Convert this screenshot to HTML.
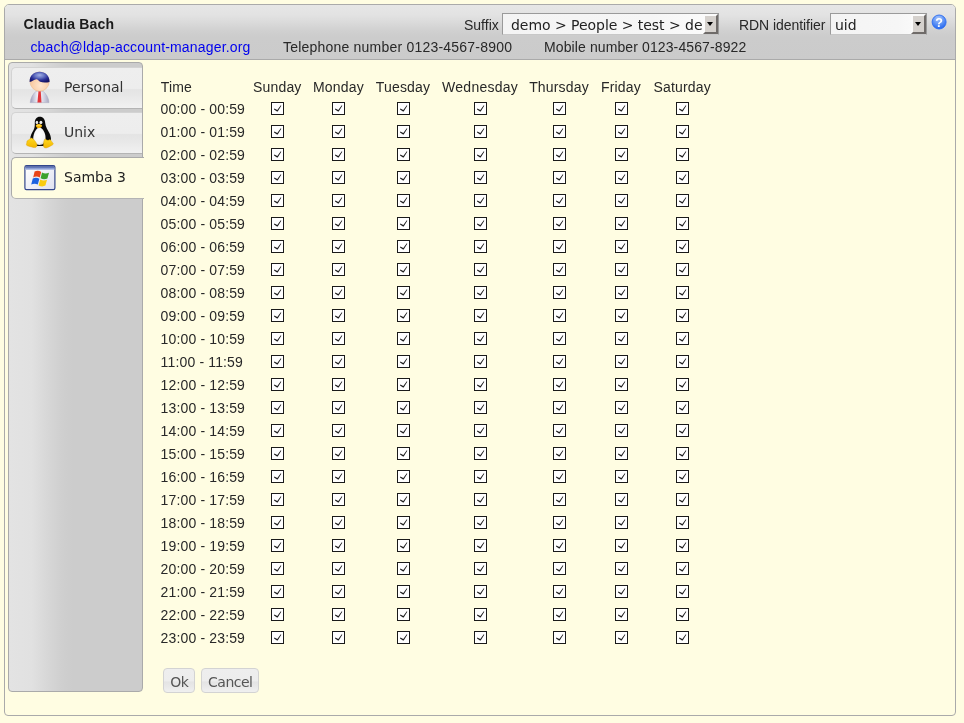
<!DOCTYPE html>
<html lang="en">
<head>
<meta charset="utf-8">
<title>LDAP Account Manager</title>
<style>
html,body{margin:0;padding:0;}
body{width:964px;height:723px;overflow:hidden;background:#fffde2;font-family:"Liberation Sans",Arial,sans-serif;font-size:14px;color:#222;position:relative;}
.abs{position:absolute;white-space:nowrap;}
#wrap{position:absolute;left:0;top:0;width:964px;height:723px;will-change:transform;}
#box{position:absolute;left:4px;top:4px;width:950px;height:710px;border:1px solid #aaa;border-radius:5px 5px 4px 4px;background:#fffde2;}
#head{position:absolute;left:0;top:0;width:950px;height:54px;border-bottom:1px solid #aaa;border-radius:4px 4px 0 0;background:linear-gradient(#e6e6e6 0%,#e3e3e3 18%,#dadada 33%,#d0d0d0 48%,#cccccc 60%,#cbcbcb 100%);}
.t{position:absolute;white-space:nowrap;line-height:16px;height:16px;font-size:14px;letter-spacing:0.17px;color:#282828;}
a.t{color:#0000ee;text-decoration:none;}
.sel{position:absolute;box-sizing:border-box;height:22px;background:linear-gradient(90deg,#f4f4f4,#f6f6f6 70%,#fcfcfc);border:1px solid;border-color:#9a9a9a #999 #c8c8c8 #9a9a9a;font-family:"DejaVu Sans",Verdana,sans-serif;font-size:14px;color:#222;overflow:hidden;white-space:nowrap;}
.sel span{position:absolute;top:2.6px;line-height:17px;}
.sel i{position:absolute;right:0px;top:0px;width:15px;height:20px;background:#d5d1cd;border:2px solid;border-color:#fbfbfb #6f6b69 #6f6b69 #fbfbfb;box-sizing:border-box;}
.sel i:after{content:"";position:absolute;left:2.4px;top:6px;border:3.5px solid transparent;border-top:4px solid #000;border-bottom:0;}
#tabs{position:absolute;left:8px;top:62px;width:133px;height:628px;border:1px solid #aaa;border-radius:4px;background:linear-gradient(90deg,#e3e3e3 0%,#e1e1e1 17%,#d7d7d7 29%,#cfcfcf 40%,#cccccc 48%,#cccccc 100%);box-sizing:content-box;}
.tab{position:absolute;left:11px;width:130px;height:40px;border-bottom-color:#b4b4b4 !important;border:1px solid #d3d3d3;border-right:0;border-radius:5px 0 0 5px;background:linear-gradient(#eeeeee 0%,#ededed 51%,#e4e4e4 54%,#e7e7e7 68%,#f1f1f1 100%);font-family:"DejaVu Sans",Verdana,sans-serif;font-size:14px;color:#333;}
.tab.act{background:#fffde2;border-color:#aaa;width:132px;color:#222;}
.tab span{position:absolute;left:52px;top:10px;line-height:18px;white-space:nowrap;}
.cb{position:absolute;width:11px;height:11px;border:1px solid #1a1a1a;background:#fff;}
.cb svg{position:absolute;left:0;top:0;}
.btn{position:absolute;box-sizing:border-box;height:25px;border:1px solid #d3d3d3;border-radius:4px;background:linear-gradient(#eeeeee 0%,#ededed 52%,#e4e4e4 56%,#e7e7e7 70%,#f0f0f0 100%);font-family:"DejaVu Sans",Verdana,sans-serif;font-size:14px;letter-spacing:-0.5px;color:#555;text-align:center;line-height:26px;text-indent:0.5px;}
svg.ic{position:absolute;left:0;top:0;overflow:visible;}
</style>
</head>
<body>
<div id="wrap">
<div id="box">
<div id="head"></div>
</div>
<div class="t" style="left:23.5px;top:16px;font-weight:bold;letter-spacing:0.16px;color:#1a1a1a;">Claudia Bach</div>
<a class="t" style="left:30.4px;top:38.6px;">cbach@ldap-account-manager.org</a>
<div class="t" style="left:283px;top:38.6px;letter-spacing:0.21px;">Telephone number 0123-4567-8900</div>
<div class="t" style="left:544px;top:38.6px;letter-spacing:0.11px;">Mobile number 0123-4567-8922</div>
<div class="t" style="left:464px;top:17px;letter-spacing:0">Suffix</div>
<div class="sel" style="left:502px;top:13px;width:217px;"><span style="left:8px;letter-spacing:-0.04px;">demo &gt; People &gt; test &gt; demo</span><i></i></div>
<div class="t" style="left:739px;top:17px;letter-spacing:-0.06px;">RDN identifier</div>
<div class="sel" style="left:830px;top:13px;width:97px;"><span style="left:4px;">uid</span><i></i></div>

<div id="tabs"></div>
<div class="tab" style="top:67px;"><span>Personal</span></div>
<div class="tab" style="top:112px;"><span>Unix</span></div>
<div class="tab act" style="top:157px;"><span>Samba 3</span></div>

<svg class="ic" width="964" height="723" viewBox="0 0 964 723">
<defs>
<radialGradient id="hg" cx="0.45" cy="0.25" r="0.75"><stop offset="0" stop-color="#a9c6fb"/><stop offset="0.55" stop-color="#5f93f5"/><stop offset="1" stop-color="#2466ee"/></radialGradient>
<radialGradient id="face" cx="0.55" cy="0.7" r="0.7"><stop offset="0" stop-color="#fee6d0"/><stop offset="1" stop-color="#f6bf90"/></radialGradient>
<radialGradient id="hair" cx="0.5" cy="0.38" r="0.62" fx="0.5" fy="0.3"><stop offset="0" stop-color="#a3b0e6"/><stop offset="0.35" stop-color="#6a78c6"/><stop offset="0.7" stop-color="#2a2f96"/><stop offset="1" stop-color="#141466"/></radialGradient>
<linearGradient id="suit" x1="0" y1="0" x2="1" y2="0"><stop offset="0" stop-color="#9c9cba"/><stop offset="0.25" stop-color="#d4d4e2"/><stop offset="0.42" stop-color="#f6f6fb"/><stop offset="0.6" stop-color="#e6e6f0"/><stop offset="0.8" stop-color="#c8c8da"/><stop offset="1" stop-color="#a6a6c0"/></linearGradient>
<linearGradient id="wtitle" x1="0" y1="0" x2="0" y2="1"><stop offset="0" stop-color="#2f458f"/><stop offset="0.5" stop-color="#7f93cf"/><stop offset="1" stop-color="#c5cfee"/></linearGradient>
<linearGradient id="wbody" x1="0" y1="0" x2="1" y2="1"><stop offset="0" stop-color="#ffffff"/><stop offset="1" stop-color="#dfe1f0"/></linearGradient>
<radialGradient id="belly" cx="0.45" cy="0.4" r="0.7"><stop offset="0" stop-color="#ffffff"/><stop offset="0.7" stop-color="#f4f4f4"/><stop offset="1" stop-color="#c8c8c8"/></radialGradient>
<linearGradient id="foot" x1="0" y1="0" x2="0" y2="1"><stop offset="0" stop-color="#ffd820"/><stop offset="1" stop-color="#f2b600"/></linearGradient>
</defs>
<!-- help -->
<g>
<circle cx="939.1" cy="22" r="7.0" fill="url(#hg)" stroke="#2b6cf0" stroke-width="0.9"/>
<text x="939.1" y="27" text-anchor="middle" font-family="Liberation Sans,Arial,sans-serif" font-weight="bold" font-size="12.5" fill="#ffffff">?</text>
</g>
<!-- user -->
<g>
<path d="M30.2 102.6 C30.6 98 32.8 94 36.2 91.2 L43 91.2 C46.4 94 48.6 98 49 102.6 Z" fill="url(#suit)" stroke="#a4a4bc" stroke-width="0.5"/>
<path d="M38.5 90.8 L40.7 90.8 L41.5 102.6 L37.4 102.6 Z" fill="#e2353a"/>
<circle cx="39.6" cy="81.6" r="9.6" fill="url(#face)" stroke="#e9b58b" stroke-width="0.5"/>
<path d="M29.6 82 C29.4 75.5 34 71.8 39.6 71.8 C45.2 71.8 49.8 75.8 49.6 81.9 C46.5 82.8 42.5 82.8 40.2 81.8 C38.9 81.2 38.3 79.6 36.8 79.2 C34.4 78.8 32.5 81.6 29.6 82 Z" fill="url(#hair)"/>
</g>
<!-- tux -->
<g>
<path d="M39.8 116.8 C43.2 116.8 45 119.5 45.2 123 C45.4 127 48 130 49.6 133.5 C51 136.6 51.4 139.5 50.6 141.5 C49.8 143.4 47 143.6 45.5 145.2 C43.5 146.4 36.5 146.4 34.8 145.2 C33 143.5 30.8 142 30.4 139 C30 136 32.2 132.5 33.6 130 C35 127.5 34.8 125.5 34.8 122.6 C34.8 119.2 36.6 116.8 39.8 116.8 Z" fill="#0a0a0a"/>
<path d="M39.4 127.5 C42.5 127.5 45.6 133 45.6 138 C45.6 142.2 43.2 145 39.6 145 C35.6 145 33.2 142.5 33.2 138.6 C33.2 133.5 36.4 127.5 39.4 127.5 Z" fill="url(#belly)"/>
<ellipse cx="36.9" cy="122.4" rx="1.3" ry="1.6" fill="#e8e8e8"/>
<ellipse cx="40.9" cy="122.4" rx="1.5" ry="1.7" fill="#f0f0f0"/>
<path d="M35.8 125.6 C36.6 124 38.2 123.8 39.2 123.9 C40.4 124 42 124.8 42.2 125.8 C41.8 127.2 40 128.2 38.6 128.2 C37.2 128.2 35.8 127 35.8 125.6 Z" fill="#f7b60a"/>
<path d="M36 125.4 C37.4 124.4 40.6 124.6 42 125.6 C40.6 126 37.4 126.2 36 125.4 Z" fill="#ffd93a"/>
<path d="M31.2 138 C32.6 137.6 34.4 140 36 142.4 C37.2 144.2 37.6 146.2 36 147.2 C34.4 148.2 31.6 146.8 28.8 146.2 C26.4 145.7 26 144.8 26.6 143.4 C27.2 142 26.4 141.2 27.6 140.6 C29 140 30 138.4 31.2 138 Z" fill="url(#foot)" stroke="#d99a00" stroke-width="0.4"/>
<path d="M45.2 138.8 C46.4 140.6 48.8 140.6 50 139.4 C51.4 140.4 51.6 142 53 143.2 C54 144 52.6 145 50.6 146 C48.6 147 46.6 148.4 44.8 147.8 C43 147.2 43.4 145 43.6 143.2 C43.8 141.4 44.2 139.4 45.2 138.8 Z" fill="url(#foot)" stroke="#d99a00" stroke-width="0.4"/>
</g>
<!-- samba -->
<g>
<rect x="24.9" y="165.7" width="30" height="24" rx="1.6" fill="url(#wbody)" stroke="#33468c" stroke-width="1.2"/>
<path d="M25.4 170 L25.4 167.4 Q25.4 166.2 26.6 166.2 L53.2 166.2 Q54.4 166.2 54.4 167.4 L54.4 170 Z" fill="url(#wtitle)"/>
<path d="M34.6 171.6 C36.8 170.4 39.2 170.6 41.2 172 L39.8 177.6 C37.8 176.4 35.4 176.2 33.2 177.4 Z" fill="#e8451a"/>
<path d="M42 172.6 C44.2 173.8 46.6 173.8 49 172.8 L47.4 178.6 C45.2 179.6 42.8 179.6 40.6 178.2 Z" fill="#3aa22c"/>
<path d="M32.8 178.6 C35 177.4 37.4 177.6 39.4 178.8 L37.8 184.6 C35.8 183.4 33.4 183.4 31.2 184.6 Z" fill="#1c62e0"/>
<path d="M40.2 179.6 C42.4 180.8 44.8 180.8 47 179.8 L45.4 185.6 C43.2 186.8 40.8 186.6 38.6 185.4 Z" fill="#f9cc10"/>
</g>
</svg>

<div class="t" style="left:160.7px;top:79px;">Time</div>
<div class="t" style="left:253.0px;top:79px;width:48px;text-align:center;">Sunday</div>
<div class="t" style="left:313.0px;top:79px;width:50px;text-align:center;">Monday</div>
<div class="t" style="left:375.5px;top:79px;width:55px;text-align:center;">Tuesday</div>
<div class="t" style="left:442.1px;top:79px;width:75.8px;text-align:center;letter-spacing:0.26px;">Wednesday</div>
<div class="t" style="left:529.0px;top:79px;width:60px;text-align:center;">Thursday</div>
<div class="t" style="left:601.0px;top:79px;width:40px;text-align:center;">Friday</div>
<div class="t" style="left:653.5px;top:79px;width:57px;text-align:center;">Saturday</div>
<div class="t" style="left:160.6px;top:101px;letter-spacing:0.15px;">00:00 - 00:59</div>
<div class="cb" style="left:271px;top:102px;"><svg width="11" height="11" viewBox="0 0 11 11"><path d="M2.3 5.5 L5.3 7.1 L8.8 2.3 L9.3 2.7 L5.7 8.4 L5.0 8.5 L2.0 6.4 Z" fill="#1c1c1c"/></svg></div>
<div class="cb" style="left:332px;top:102px;"><svg width="11" height="11" viewBox="0 0 11 11"><path d="M2.3 5.5 L5.3 7.1 L8.8 2.3 L9.3 2.7 L5.7 8.4 L5.0 8.5 L2.0 6.4 Z" fill="#1c1c1c"/></svg></div>
<div class="cb" style="left:397px;top:102px;"><svg width="11" height="11" viewBox="0 0 11 11"><path d="M2.3 5.5 L5.3 7.1 L8.8 2.3 L9.3 2.7 L5.7 8.4 L5.0 8.5 L2.0 6.4 Z" fill="#1c1c1c"/></svg></div>
<div class="cb" style="left:474px;top:102px;"><svg width="11" height="11" viewBox="0 0 11 11"><path d="M2.3 5.5 L5.3 7.1 L8.8 2.3 L9.3 2.7 L5.7 8.4 L5.0 8.5 L2.0 6.4 Z" fill="#1c1c1c"/></svg></div>
<div class="cb" style="left:553px;top:102px;"><svg width="11" height="11" viewBox="0 0 11 11"><path d="M2.3 5.5 L5.3 7.1 L8.8 2.3 L9.3 2.7 L5.7 8.4 L5.0 8.5 L2.0 6.4 Z" fill="#1c1c1c"/></svg></div>
<div class="cb" style="left:615px;top:102px;"><svg width="11" height="11" viewBox="0 0 11 11"><path d="M2.3 5.5 L5.3 7.1 L8.8 2.3 L9.3 2.7 L5.7 8.4 L5.0 8.5 L2.0 6.4 Z" fill="#1c1c1c"/></svg></div>
<div class="cb" style="left:676px;top:102px;"><svg width="11" height="11" viewBox="0 0 11 11"><path d="M2.3 5.5 L5.3 7.1 L8.8 2.3 L9.3 2.7 L5.7 8.4 L5.0 8.5 L2.0 6.4 Z" fill="#1c1c1c"/></svg></div>
<div class="t" style="left:160.6px;top:124px;letter-spacing:0.15px;">01:00 - 01:59</div>
<div class="cb" style="left:271px;top:125px;"><svg width="11" height="11" viewBox="0 0 11 11"><path d="M2.3 5.5 L5.3 7.1 L8.8 2.3 L9.3 2.7 L5.7 8.4 L5.0 8.5 L2.0 6.4 Z" fill="#1c1c1c"/></svg></div>
<div class="cb" style="left:332px;top:125px;"><svg width="11" height="11" viewBox="0 0 11 11"><path d="M2.3 5.5 L5.3 7.1 L8.8 2.3 L9.3 2.7 L5.7 8.4 L5.0 8.5 L2.0 6.4 Z" fill="#1c1c1c"/></svg></div>
<div class="cb" style="left:397px;top:125px;"><svg width="11" height="11" viewBox="0 0 11 11"><path d="M2.3 5.5 L5.3 7.1 L8.8 2.3 L9.3 2.7 L5.7 8.4 L5.0 8.5 L2.0 6.4 Z" fill="#1c1c1c"/></svg></div>
<div class="cb" style="left:474px;top:125px;"><svg width="11" height="11" viewBox="0 0 11 11"><path d="M2.3 5.5 L5.3 7.1 L8.8 2.3 L9.3 2.7 L5.7 8.4 L5.0 8.5 L2.0 6.4 Z" fill="#1c1c1c"/></svg></div>
<div class="cb" style="left:553px;top:125px;"><svg width="11" height="11" viewBox="0 0 11 11"><path d="M2.3 5.5 L5.3 7.1 L8.8 2.3 L9.3 2.7 L5.7 8.4 L5.0 8.5 L2.0 6.4 Z" fill="#1c1c1c"/></svg></div>
<div class="cb" style="left:615px;top:125px;"><svg width="11" height="11" viewBox="0 0 11 11"><path d="M2.3 5.5 L5.3 7.1 L8.8 2.3 L9.3 2.7 L5.7 8.4 L5.0 8.5 L2.0 6.4 Z" fill="#1c1c1c"/></svg></div>
<div class="cb" style="left:676px;top:125px;"><svg width="11" height="11" viewBox="0 0 11 11"><path d="M2.3 5.5 L5.3 7.1 L8.8 2.3 L9.3 2.7 L5.7 8.4 L5.0 8.5 L2.0 6.4 Z" fill="#1c1c1c"/></svg></div>
<div class="t" style="left:160.6px;top:147px;letter-spacing:0.15px;">02:00 - 02:59</div>
<div class="cb" style="left:271px;top:148px;"><svg width="11" height="11" viewBox="0 0 11 11"><path d="M2.3 5.5 L5.3 7.1 L8.8 2.3 L9.3 2.7 L5.7 8.4 L5.0 8.5 L2.0 6.4 Z" fill="#1c1c1c"/></svg></div>
<div class="cb" style="left:332px;top:148px;"><svg width="11" height="11" viewBox="0 0 11 11"><path d="M2.3 5.5 L5.3 7.1 L8.8 2.3 L9.3 2.7 L5.7 8.4 L5.0 8.5 L2.0 6.4 Z" fill="#1c1c1c"/></svg></div>
<div class="cb" style="left:397px;top:148px;"><svg width="11" height="11" viewBox="0 0 11 11"><path d="M2.3 5.5 L5.3 7.1 L8.8 2.3 L9.3 2.7 L5.7 8.4 L5.0 8.5 L2.0 6.4 Z" fill="#1c1c1c"/></svg></div>
<div class="cb" style="left:474px;top:148px;"><svg width="11" height="11" viewBox="0 0 11 11"><path d="M2.3 5.5 L5.3 7.1 L8.8 2.3 L9.3 2.7 L5.7 8.4 L5.0 8.5 L2.0 6.4 Z" fill="#1c1c1c"/></svg></div>
<div class="cb" style="left:553px;top:148px;"><svg width="11" height="11" viewBox="0 0 11 11"><path d="M2.3 5.5 L5.3 7.1 L8.8 2.3 L9.3 2.7 L5.7 8.4 L5.0 8.5 L2.0 6.4 Z" fill="#1c1c1c"/></svg></div>
<div class="cb" style="left:615px;top:148px;"><svg width="11" height="11" viewBox="0 0 11 11"><path d="M2.3 5.5 L5.3 7.1 L8.8 2.3 L9.3 2.7 L5.7 8.4 L5.0 8.5 L2.0 6.4 Z" fill="#1c1c1c"/></svg></div>
<div class="cb" style="left:676px;top:148px;"><svg width="11" height="11" viewBox="0 0 11 11"><path d="M2.3 5.5 L5.3 7.1 L8.8 2.3 L9.3 2.7 L5.7 8.4 L5.0 8.5 L2.0 6.4 Z" fill="#1c1c1c"/></svg></div>
<div class="t" style="left:160.6px;top:170px;letter-spacing:0.15px;">03:00 - 03:59</div>
<div class="cb" style="left:271px;top:171px;"><svg width="11" height="11" viewBox="0 0 11 11"><path d="M2.3 5.5 L5.3 7.1 L8.8 2.3 L9.3 2.7 L5.7 8.4 L5.0 8.5 L2.0 6.4 Z" fill="#1c1c1c"/></svg></div>
<div class="cb" style="left:332px;top:171px;"><svg width="11" height="11" viewBox="0 0 11 11"><path d="M2.3 5.5 L5.3 7.1 L8.8 2.3 L9.3 2.7 L5.7 8.4 L5.0 8.5 L2.0 6.4 Z" fill="#1c1c1c"/></svg></div>
<div class="cb" style="left:397px;top:171px;"><svg width="11" height="11" viewBox="0 0 11 11"><path d="M2.3 5.5 L5.3 7.1 L8.8 2.3 L9.3 2.7 L5.7 8.4 L5.0 8.5 L2.0 6.4 Z" fill="#1c1c1c"/></svg></div>
<div class="cb" style="left:474px;top:171px;"><svg width="11" height="11" viewBox="0 0 11 11"><path d="M2.3 5.5 L5.3 7.1 L8.8 2.3 L9.3 2.7 L5.7 8.4 L5.0 8.5 L2.0 6.4 Z" fill="#1c1c1c"/></svg></div>
<div class="cb" style="left:553px;top:171px;"><svg width="11" height="11" viewBox="0 0 11 11"><path d="M2.3 5.5 L5.3 7.1 L8.8 2.3 L9.3 2.7 L5.7 8.4 L5.0 8.5 L2.0 6.4 Z" fill="#1c1c1c"/></svg></div>
<div class="cb" style="left:615px;top:171px;"><svg width="11" height="11" viewBox="0 0 11 11"><path d="M2.3 5.5 L5.3 7.1 L8.8 2.3 L9.3 2.7 L5.7 8.4 L5.0 8.5 L2.0 6.4 Z" fill="#1c1c1c"/></svg></div>
<div class="cb" style="left:676px;top:171px;"><svg width="11" height="11" viewBox="0 0 11 11"><path d="M2.3 5.5 L5.3 7.1 L8.8 2.3 L9.3 2.7 L5.7 8.4 L5.0 8.5 L2.0 6.4 Z" fill="#1c1c1c"/></svg></div>
<div class="t" style="left:160.6px;top:193px;letter-spacing:0.15px;">04:00 - 04:59</div>
<div class="cb" style="left:271px;top:194px;"><svg width="11" height="11" viewBox="0 0 11 11"><path d="M2.3 5.5 L5.3 7.1 L8.8 2.3 L9.3 2.7 L5.7 8.4 L5.0 8.5 L2.0 6.4 Z" fill="#1c1c1c"/></svg></div>
<div class="cb" style="left:332px;top:194px;"><svg width="11" height="11" viewBox="0 0 11 11"><path d="M2.3 5.5 L5.3 7.1 L8.8 2.3 L9.3 2.7 L5.7 8.4 L5.0 8.5 L2.0 6.4 Z" fill="#1c1c1c"/></svg></div>
<div class="cb" style="left:397px;top:194px;"><svg width="11" height="11" viewBox="0 0 11 11"><path d="M2.3 5.5 L5.3 7.1 L8.8 2.3 L9.3 2.7 L5.7 8.4 L5.0 8.5 L2.0 6.4 Z" fill="#1c1c1c"/></svg></div>
<div class="cb" style="left:474px;top:194px;"><svg width="11" height="11" viewBox="0 0 11 11"><path d="M2.3 5.5 L5.3 7.1 L8.8 2.3 L9.3 2.7 L5.7 8.4 L5.0 8.5 L2.0 6.4 Z" fill="#1c1c1c"/></svg></div>
<div class="cb" style="left:553px;top:194px;"><svg width="11" height="11" viewBox="0 0 11 11"><path d="M2.3 5.5 L5.3 7.1 L8.8 2.3 L9.3 2.7 L5.7 8.4 L5.0 8.5 L2.0 6.4 Z" fill="#1c1c1c"/></svg></div>
<div class="cb" style="left:615px;top:194px;"><svg width="11" height="11" viewBox="0 0 11 11"><path d="M2.3 5.5 L5.3 7.1 L8.8 2.3 L9.3 2.7 L5.7 8.4 L5.0 8.5 L2.0 6.4 Z" fill="#1c1c1c"/></svg></div>
<div class="cb" style="left:676px;top:194px;"><svg width="11" height="11" viewBox="0 0 11 11"><path d="M2.3 5.5 L5.3 7.1 L8.8 2.3 L9.3 2.7 L5.7 8.4 L5.0 8.5 L2.0 6.4 Z" fill="#1c1c1c"/></svg></div>
<div class="t" style="left:160.6px;top:216px;letter-spacing:0.15px;">05:00 - 05:59</div>
<div class="cb" style="left:271px;top:217px;"><svg width="11" height="11" viewBox="0 0 11 11"><path d="M2.3 5.5 L5.3 7.1 L8.8 2.3 L9.3 2.7 L5.7 8.4 L5.0 8.5 L2.0 6.4 Z" fill="#1c1c1c"/></svg></div>
<div class="cb" style="left:332px;top:217px;"><svg width="11" height="11" viewBox="0 0 11 11"><path d="M2.3 5.5 L5.3 7.1 L8.8 2.3 L9.3 2.7 L5.7 8.4 L5.0 8.5 L2.0 6.4 Z" fill="#1c1c1c"/></svg></div>
<div class="cb" style="left:397px;top:217px;"><svg width="11" height="11" viewBox="0 0 11 11"><path d="M2.3 5.5 L5.3 7.1 L8.8 2.3 L9.3 2.7 L5.7 8.4 L5.0 8.5 L2.0 6.4 Z" fill="#1c1c1c"/></svg></div>
<div class="cb" style="left:474px;top:217px;"><svg width="11" height="11" viewBox="0 0 11 11"><path d="M2.3 5.5 L5.3 7.1 L8.8 2.3 L9.3 2.7 L5.7 8.4 L5.0 8.5 L2.0 6.4 Z" fill="#1c1c1c"/></svg></div>
<div class="cb" style="left:553px;top:217px;"><svg width="11" height="11" viewBox="0 0 11 11"><path d="M2.3 5.5 L5.3 7.1 L8.8 2.3 L9.3 2.7 L5.7 8.4 L5.0 8.5 L2.0 6.4 Z" fill="#1c1c1c"/></svg></div>
<div class="cb" style="left:615px;top:217px;"><svg width="11" height="11" viewBox="0 0 11 11"><path d="M2.3 5.5 L5.3 7.1 L8.8 2.3 L9.3 2.7 L5.7 8.4 L5.0 8.5 L2.0 6.4 Z" fill="#1c1c1c"/></svg></div>
<div class="cb" style="left:676px;top:217px;"><svg width="11" height="11" viewBox="0 0 11 11"><path d="M2.3 5.5 L5.3 7.1 L8.8 2.3 L9.3 2.7 L5.7 8.4 L5.0 8.5 L2.0 6.4 Z" fill="#1c1c1c"/></svg></div>
<div class="t" style="left:160.6px;top:239px;letter-spacing:0.15px;">06:00 - 06:59</div>
<div class="cb" style="left:271px;top:240px;"><svg width="11" height="11" viewBox="0 0 11 11"><path d="M2.3 5.5 L5.3 7.1 L8.8 2.3 L9.3 2.7 L5.7 8.4 L5.0 8.5 L2.0 6.4 Z" fill="#1c1c1c"/></svg></div>
<div class="cb" style="left:332px;top:240px;"><svg width="11" height="11" viewBox="0 0 11 11"><path d="M2.3 5.5 L5.3 7.1 L8.8 2.3 L9.3 2.7 L5.7 8.4 L5.0 8.5 L2.0 6.4 Z" fill="#1c1c1c"/></svg></div>
<div class="cb" style="left:397px;top:240px;"><svg width="11" height="11" viewBox="0 0 11 11"><path d="M2.3 5.5 L5.3 7.1 L8.8 2.3 L9.3 2.7 L5.7 8.4 L5.0 8.5 L2.0 6.4 Z" fill="#1c1c1c"/></svg></div>
<div class="cb" style="left:474px;top:240px;"><svg width="11" height="11" viewBox="0 0 11 11"><path d="M2.3 5.5 L5.3 7.1 L8.8 2.3 L9.3 2.7 L5.7 8.4 L5.0 8.5 L2.0 6.4 Z" fill="#1c1c1c"/></svg></div>
<div class="cb" style="left:553px;top:240px;"><svg width="11" height="11" viewBox="0 0 11 11"><path d="M2.3 5.5 L5.3 7.1 L8.8 2.3 L9.3 2.7 L5.7 8.4 L5.0 8.5 L2.0 6.4 Z" fill="#1c1c1c"/></svg></div>
<div class="cb" style="left:615px;top:240px;"><svg width="11" height="11" viewBox="0 0 11 11"><path d="M2.3 5.5 L5.3 7.1 L8.8 2.3 L9.3 2.7 L5.7 8.4 L5.0 8.5 L2.0 6.4 Z" fill="#1c1c1c"/></svg></div>
<div class="cb" style="left:676px;top:240px;"><svg width="11" height="11" viewBox="0 0 11 11"><path d="M2.3 5.5 L5.3 7.1 L8.8 2.3 L9.3 2.7 L5.7 8.4 L5.0 8.5 L2.0 6.4 Z" fill="#1c1c1c"/></svg></div>
<div class="t" style="left:160.6px;top:262px;letter-spacing:0.15px;">07:00 - 07:59</div>
<div class="cb" style="left:271px;top:263px;"><svg width="11" height="11" viewBox="0 0 11 11"><path d="M2.3 5.5 L5.3 7.1 L8.8 2.3 L9.3 2.7 L5.7 8.4 L5.0 8.5 L2.0 6.4 Z" fill="#1c1c1c"/></svg></div>
<div class="cb" style="left:332px;top:263px;"><svg width="11" height="11" viewBox="0 0 11 11"><path d="M2.3 5.5 L5.3 7.1 L8.8 2.3 L9.3 2.7 L5.7 8.4 L5.0 8.5 L2.0 6.4 Z" fill="#1c1c1c"/></svg></div>
<div class="cb" style="left:397px;top:263px;"><svg width="11" height="11" viewBox="0 0 11 11"><path d="M2.3 5.5 L5.3 7.1 L8.8 2.3 L9.3 2.7 L5.7 8.4 L5.0 8.5 L2.0 6.4 Z" fill="#1c1c1c"/></svg></div>
<div class="cb" style="left:474px;top:263px;"><svg width="11" height="11" viewBox="0 0 11 11"><path d="M2.3 5.5 L5.3 7.1 L8.8 2.3 L9.3 2.7 L5.7 8.4 L5.0 8.5 L2.0 6.4 Z" fill="#1c1c1c"/></svg></div>
<div class="cb" style="left:553px;top:263px;"><svg width="11" height="11" viewBox="0 0 11 11"><path d="M2.3 5.5 L5.3 7.1 L8.8 2.3 L9.3 2.7 L5.7 8.4 L5.0 8.5 L2.0 6.4 Z" fill="#1c1c1c"/></svg></div>
<div class="cb" style="left:615px;top:263px;"><svg width="11" height="11" viewBox="0 0 11 11"><path d="M2.3 5.5 L5.3 7.1 L8.8 2.3 L9.3 2.7 L5.7 8.4 L5.0 8.5 L2.0 6.4 Z" fill="#1c1c1c"/></svg></div>
<div class="cb" style="left:676px;top:263px;"><svg width="11" height="11" viewBox="0 0 11 11"><path d="M2.3 5.5 L5.3 7.1 L8.8 2.3 L9.3 2.7 L5.7 8.4 L5.0 8.5 L2.0 6.4 Z" fill="#1c1c1c"/></svg></div>
<div class="t" style="left:160.6px;top:285px;letter-spacing:0.15px;">08:00 - 08:59</div>
<div class="cb" style="left:271px;top:286px;"><svg width="11" height="11" viewBox="0 0 11 11"><path d="M2.3 5.5 L5.3 7.1 L8.8 2.3 L9.3 2.7 L5.7 8.4 L5.0 8.5 L2.0 6.4 Z" fill="#1c1c1c"/></svg></div>
<div class="cb" style="left:332px;top:286px;"><svg width="11" height="11" viewBox="0 0 11 11"><path d="M2.3 5.5 L5.3 7.1 L8.8 2.3 L9.3 2.7 L5.7 8.4 L5.0 8.5 L2.0 6.4 Z" fill="#1c1c1c"/></svg></div>
<div class="cb" style="left:397px;top:286px;"><svg width="11" height="11" viewBox="0 0 11 11"><path d="M2.3 5.5 L5.3 7.1 L8.8 2.3 L9.3 2.7 L5.7 8.4 L5.0 8.5 L2.0 6.4 Z" fill="#1c1c1c"/></svg></div>
<div class="cb" style="left:474px;top:286px;"><svg width="11" height="11" viewBox="0 0 11 11"><path d="M2.3 5.5 L5.3 7.1 L8.8 2.3 L9.3 2.7 L5.7 8.4 L5.0 8.5 L2.0 6.4 Z" fill="#1c1c1c"/></svg></div>
<div class="cb" style="left:553px;top:286px;"><svg width="11" height="11" viewBox="0 0 11 11"><path d="M2.3 5.5 L5.3 7.1 L8.8 2.3 L9.3 2.7 L5.7 8.4 L5.0 8.5 L2.0 6.4 Z" fill="#1c1c1c"/></svg></div>
<div class="cb" style="left:615px;top:286px;"><svg width="11" height="11" viewBox="0 0 11 11"><path d="M2.3 5.5 L5.3 7.1 L8.8 2.3 L9.3 2.7 L5.7 8.4 L5.0 8.5 L2.0 6.4 Z" fill="#1c1c1c"/></svg></div>
<div class="cb" style="left:676px;top:286px;"><svg width="11" height="11" viewBox="0 0 11 11"><path d="M2.3 5.5 L5.3 7.1 L8.8 2.3 L9.3 2.7 L5.7 8.4 L5.0 8.5 L2.0 6.4 Z" fill="#1c1c1c"/></svg></div>
<div class="t" style="left:160.6px;top:308px;letter-spacing:0.15px;">09:00 - 09:59</div>
<div class="cb" style="left:271px;top:309px;"><svg width="11" height="11" viewBox="0 0 11 11"><path d="M2.3 5.5 L5.3 7.1 L8.8 2.3 L9.3 2.7 L5.7 8.4 L5.0 8.5 L2.0 6.4 Z" fill="#1c1c1c"/></svg></div>
<div class="cb" style="left:332px;top:309px;"><svg width="11" height="11" viewBox="0 0 11 11"><path d="M2.3 5.5 L5.3 7.1 L8.8 2.3 L9.3 2.7 L5.7 8.4 L5.0 8.5 L2.0 6.4 Z" fill="#1c1c1c"/></svg></div>
<div class="cb" style="left:397px;top:309px;"><svg width="11" height="11" viewBox="0 0 11 11"><path d="M2.3 5.5 L5.3 7.1 L8.8 2.3 L9.3 2.7 L5.7 8.4 L5.0 8.5 L2.0 6.4 Z" fill="#1c1c1c"/></svg></div>
<div class="cb" style="left:474px;top:309px;"><svg width="11" height="11" viewBox="0 0 11 11"><path d="M2.3 5.5 L5.3 7.1 L8.8 2.3 L9.3 2.7 L5.7 8.4 L5.0 8.5 L2.0 6.4 Z" fill="#1c1c1c"/></svg></div>
<div class="cb" style="left:553px;top:309px;"><svg width="11" height="11" viewBox="0 0 11 11"><path d="M2.3 5.5 L5.3 7.1 L8.8 2.3 L9.3 2.7 L5.7 8.4 L5.0 8.5 L2.0 6.4 Z" fill="#1c1c1c"/></svg></div>
<div class="cb" style="left:615px;top:309px;"><svg width="11" height="11" viewBox="0 0 11 11"><path d="M2.3 5.5 L5.3 7.1 L8.8 2.3 L9.3 2.7 L5.7 8.4 L5.0 8.5 L2.0 6.4 Z" fill="#1c1c1c"/></svg></div>
<div class="cb" style="left:676px;top:309px;"><svg width="11" height="11" viewBox="0 0 11 11"><path d="M2.3 5.5 L5.3 7.1 L8.8 2.3 L9.3 2.7 L5.7 8.4 L5.0 8.5 L2.0 6.4 Z" fill="#1c1c1c"/></svg></div>
<div class="t" style="left:160.6px;top:331px;letter-spacing:0.15px;">10:00 - 10:59</div>
<div class="cb" style="left:271px;top:332px;"><svg width="11" height="11" viewBox="0 0 11 11"><path d="M2.3 5.5 L5.3 7.1 L8.8 2.3 L9.3 2.7 L5.7 8.4 L5.0 8.5 L2.0 6.4 Z" fill="#1c1c1c"/></svg></div>
<div class="cb" style="left:332px;top:332px;"><svg width="11" height="11" viewBox="0 0 11 11"><path d="M2.3 5.5 L5.3 7.1 L8.8 2.3 L9.3 2.7 L5.7 8.4 L5.0 8.5 L2.0 6.4 Z" fill="#1c1c1c"/></svg></div>
<div class="cb" style="left:397px;top:332px;"><svg width="11" height="11" viewBox="0 0 11 11"><path d="M2.3 5.5 L5.3 7.1 L8.8 2.3 L9.3 2.7 L5.7 8.4 L5.0 8.5 L2.0 6.4 Z" fill="#1c1c1c"/></svg></div>
<div class="cb" style="left:474px;top:332px;"><svg width="11" height="11" viewBox="0 0 11 11"><path d="M2.3 5.5 L5.3 7.1 L8.8 2.3 L9.3 2.7 L5.7 8.4 L5.0 8.5 L2.0 6.4 Z" fill="#1c1c1c"/></svg></div>
<div class="cb" style="left:553px;top:332px;"><svg width="11" height="11" viewBox="0 0 11 11"><path d="M2.3 5.5 L5.3 7.1 L8.8 2.3 L9.3 2.7 L5.7 8.4 L5.0 8.5 L2.0 6.4 Z" fill="#1c1c1c"/></svg></div>
<div class="cb" style="left:615px;top:332px;"><svg width="11" height="11" viewBox="0 0 11 11"><path d="M2.3 5.5 L5.3 7.1 L8.8 2.3 L9.3 2.7 L5.7 8.4 L5.0 8.5 L2.0 6.4 Z" fill="#1c1c1c"/></svg></div>
<div class="cb" style="left:676px;top:332px;"><svg width="11" height="11" viewBox="0 0 11 11"><path d="M2.3 5.5 L5.3 7.1 L8.8 2.3 L9.3 2.7 L5.7 8.4 L5.0 8.5 L2.0 6.4 Z" fill="#1c1c1c"/></svg></div>
<div class="t" style="left:160.6px;top:354px;letter-spacing:0.15px;">11:00 - 11:59</div>
<div class="cb" style="left:271px;top:355px;"><svg width="11" height="11" viewBox="0 0 11 11"><path d="M2.3 5.5 L5.3 7.1 L8.8 2.3 L9.3 2.7 L5.7 8.4 L5.0 8.5 L2.0 6.4 Z" fill="#1c1c1c"/></svg></div>
<div class="cb" style="left:332px;top:355px;"><svg width="11" height="11" viewBox="0 0 11 11"><path d="M2.3 5.5 L5.3 7.1 L8.8 2.3 L9.3 2.7 L5.7 8.4 L5.0 8.5 L2.0 6.4 Z" fill="#1c1c1c"/></svg></div>
<div class="cb" style="left:397px;top:355px;"><svg width="11" height="11" viewBox="0 0 11 11"><path d="M2.3 5.5 L5.3 7.1 L8.8 2.3 L9.3 2.7 L5.7 8.4 L5.0 8.5 L2.0 6.4 Z" fill="#1c1c1c"/></svg></div>
<div class="cb" style="left:474px;top:355px;"><svg width="11" height="11" viewBox="0 0 11 11"><path d="M2.3 5.5 L5.3 7.1 L8.8 2.3 L9.3 2.7 L5.7 8.4 L5.0 8.5 L2.0 6.4 Z" fill="#1c1c1c"/></svg></div>
<div class="cb" style="left:553px;top:355px;"><svg width="11" height="11" viewBox="0 0 11 11"><path d="M2.3 5.5 L5.3 7.1 L8.8 2.3 L9.3 2.7 L5.7 8.4 L5.0 8.5 L2.0 6.4 Z" fill="#1c1c1c"/></svg></div>
<div class="cb" style="left:615px;top:355px;"><svg width="11" height="11" viewBox="0 0 11 11"><path d="M2.3 5.5 L5.3 7.1 L8.8 2.3 L9.3 2.7 L5.7 8.4 L5.0 8.5 L2.0 6.4 Z" fill="#1c1c1c"/></svg></div>
<div class="cb" style="left:676px;top:355px;"><svg width="11" height="11" viewBox="0 0 11 11"><path d="M2.3 5.5 L5.3 7.1 L8.8 2.3 L9.3 2.7 L5.7 8.4 L5.0 8.5 L2.0 6.4 Z" fill="#1c1c1c"/></svg></div>
<div class="t" style="left:160.6px;top:377px;letter-spacing:0.15px;">12:00 - 12:59</div>
<div class="cb" style="left:271px;top:378px;"><svg width="11" height="11" viewBox="0 0 11 11"><path d="M2.3 5.5 L5.3 7.1 L8.8 2.3 L9.3 2.7 L5.7 8.4 L5.0 8.5 L2.0 6.4 Z" fill="#1c1c1c"/></svg></div>
<div class="cb" style="left:332px;top:378px;"><svg width="11" height="11" viewBox="0 0 11 11"><path d="M2.3 5.5 L5.3 7.1 L8.8 2.3 L9.3 2.7 L5.7 8.4 L5.0 8.5 L2.0 6.4 Z" fill="#1c1c1c"/></svg></div>
<div class="cb" style="left:397px;top:378px;"><svg width="11" height="11" viewBox="0 0 11 11"><path d="M2.3 5.5 L5.3 7.1 L8.8 2.3 L9.3 2.7 L5.7 8.4 L5.0 8.5 L2.0 6.4 Z" fill="#1c1c1c"/></svg></div>
<div class="cb" style="left:474px;top:378px;"><svg width="11" height="11" viewBox="0 0 11 11"><path d="M2.3 5.5 L5.3 7.1 L8.8 2.3 L9.3 2.7 L5.7 8.4 L5.0 8.5 L2.0 6.4 Z" fill="#1c1c1c"/></svg></div>
<div class="cb" style="left:553px;top:378px;"><svg width="11" height="11" viewBox="0 0 11 11"><path d="M2.3 5.5 L5.3 7.1 L8.8 2.3 L9.3 2.7 L5.7 8.4 L5.0 8.5 L2.0 6.4 Z" fill="#1c1c1c"/></svg></div>
<div class="cb" style="left:615px;top:378px;"><svg width="11" height="11" viewBox="0 0 11 11"><path d="M2.3 5.5 L5.3 7.1 L8.8 2.3 L9.3 2.7 L5.7 8.4 L5.0 8.5 L2.0 6.4 Z" fill="#1c1c1c"/></svg></div>
<div class="cb" style="left:676px;top:378px;"><svg width="11" height="11" viewBox="0 0 11 11"><path d="M2.3 5.5 L5.3 7.1 L8.8 2.3 L9.3 2.7 L5.7 8.4 L5.0 8.5 L2.0 6.4 Z" fill="#1c1c1c"/></svg></div>
<div class="t" style="left:160.6px;top:400px;letter-spacing:0.15px;">13:00 - 13:59</div>
<div class="cb" style="left:271px;top:401px;"><svg width="11" height="11" viewBox="0 0 11 11"><path d="M2.3 5.5 L5.3 7.1 L8.8 2.3 L9.3 2.7 L5.7 8.4 L5.0 8.5 L2.0 6.4 Z" fill="#1c1c1c"/></svg></div>
<div class="cb" style="left:332px;top:401px;"><svg width="11" height="11" viewBox="0 0 11 11"><path d="M2.3 5.5 L5.3 7.1 L8.8 2.3 L9.3 2.7 L5.7 8.4 L5.0 8.5 L2.0 6.4 Z" fill="#1c1c1c"/></svg></div>
<div class="cb" style="left:397px;top:401px;"><svg width="11" height="11" viewBox="0 0 11 11"><path d="M2.3 5.5 L5.3 7.1 L8.8 2.3 L9.3 2.7 L5.7 8.4 L5.0 8.5 L2.0 6.4 Z" fill="#1c1c1c"/></svg></div>
<div class="cb" style="left:474px;top:401px;"><svg width="11" height="11" viewBox="0 0 11 11"><path d="M2.3 5.5 L5.3 7.1 L8.8 2.3 L9.3 2.7 L5.7 8.4 L5.0 8.5 L2.0 6.4 Z" fill="#1c1c1c"/></svg></div>
<div class="cb" style="left:553px;top:401px;"><svg width="11" height="11" viewBox="0 0 11 11"><path d="M2.3 5.5 L5.3 7.1 L8.8 2.3 L9.3 2.7 L5.7 8.4 L5.0 8.5 L2.0 6.4 Z" fill="#1c1c1c"/></svg></div>
<div class="cb" style="left:615px;top:401px;"><svg width="11" height="11" viewBox="0 0 11 11"><path d="M2.3 5.5 L5.3 7.1 L8.8 2.3 L9.3 2.7 L5.7 8.4 L5.0 8.5 L2.0 6.4 Z" fill="#1c1c1c"/></svg></div>
<div class="cb" style="left:676px;top:401px;"><svg width="11" height="11" viewBox="0 0 11 11"><path d="M2.3 5.5 L5.3 7.1 L8.8 2.3 L9.3 2.7 L5.7 8.4 L5.0 8.5 L2.0 6.4 Z" fill="#1c1c1c"/></svg></div>
<div class="t" style="left:160.6px;top:423px;letter-spacing:0.15px;">14:00 - 14:59</div>
<div class="cb" style="left:271px;top:424px;"><svg width="11" height="11" viewBox="0 0 11 11"><path d="M2.3 5.5 L5.3 7.1 L8.8 2.3 L9.3 2.7 L5.7 8.4 L5.0 8.5 L2.0 6.4 Z" fill="#1c1c1c"/></svg></div>
<div class="cb" style="left:332px;top:424px;"><svg width="11" height="11" viewBox="0 0 11 11"><path d="M2.3 5.5 L5.3 7.1 L8.8 2.3 L9.3 2.7 L5.7 8.4 L5.0 8.5 L2.0 6.4 Z" fill="#1c1c1c"/></svg></div>
<div class="cb" style="left:397px;top:424px;"><svg width="11" height="11" viewBox="0 0 11 11"><path d="M2.3 5.5 L5.3 7.1 L8.8 2.3 L9.3 2.7 L5.7 8.4 L5.0 8.5 L2.0 6.4 Z" fill="#1c1c1c"/></svg></div>
<div class="cb" style="left:474px;top:424px;"><svg width="11" height="11" viewBox="0 0 11 11"><path d="M2.3 5.5 L5.3 7.1 L8.8 2.3 L9.3 2.7 L5.7 8.4 L5.0 8.5 L2.0 6.4 Z" fill="#1c1c1c"/></svg></div>
<div class="cb" style="left:553px;top:424px;"><svg width="11" height="11" viewBox="0 0 11 11"><path d="M2.3 5.5 L5.3 7.1 L8.8 2.3 L9.3 2.7 L5.7 8.4 L5.0 8.5 L2.0 6.4 Z" fill="#1c1c1c"/></svg></div>
<div class="cb" style="left:615px;top:424px;"><svg width="11" height="11" viewBox="0 0 11 11"><path d="M2.3 5.5 L5.3 7.1 L8.8 2.3 L9.3 2.7 L5.7 8.4 L5.0 8.5 L2.0 6.4 Z" fill="#1c1c1c"/></svg></div>
<div class="cb" style="left:676px;top:424px;"><svg width="11" height="11" viewBox="0 0 11 11"><path d="M2.3 5.5 L5.3 7.1 L8.8 2.3 L9.3 2.7 L5.7 8.4 L5.0 8.5 L2.0 6.4 Z" fill="#1c1c1c"/></svg></div>
<div class="t" style="left:160.6px;top:446px;letter-spacing:0.15px;">15:00 - 15:59</div>
<div class="cb" style="left:271px;top:447px;"><svg width="11" height="11" viewBox="0 0 11 11"><path d="M2.3 5.5 L5.3 7.1 L8.8 2.3 L9.3 2.7 L5.7 8.4 L5.0 8.5 L2.0 6.4 Z" fill="#1c1c1c"/></svg></div>
<div class="cb" style="left:332px;top:447px;"><svg width="11" height="11" viewBox="0 0 11 11"><path d="M2.3 5.5 L5.3 7.1 L8.8 2.3 L9.3 2.7 L5.7 8.4 L5.0 8.5 L2.0 6.4 Z" fill="#1c1c1c"/></svg></div>
<div class="cb" style="left:397px;top:447px;"><svg width="11" height="11" viewBox="0 0 11 11"><path d="M2.3 5.5 L5.3 7.1 L8.8 2.3 L9.3 2.7 L5.7 8.4 L5.0 8.5 L2.0 6.4 Z" fill="#1c1c1c"/></svg></div>
<div class="cb" style="left:474px;top:447px;"><svg width="11" height="11" viewBox="0 0 11 11"><path d="M2.3 5.5 L5.3 7.1 L8.8 2.3 L9.3 2.7 L5.7 8.4 L5.0 8.5 L2.0 6.4 Z" fill="#1c1c1c"/></svg></div>
<div class="cb" style="left:553px;top:447px;"><svg width="11" height="11" viewBox="0 0 11 11"><path d="M2.3 5.5 L5.3 7.1 L8.8 2.3 L9.3 2.7 L5.7 8.4 L5.0 8.5 L2.0 6.4 Z" fill="#1c1c1c"/></svg></div>
<div class="cb" style="left:615px;top:447px;"><svg width="11" height="11" viewBox="0 0 11 11"><path d="M2.3 5.5 L5.3 7.1 L8.8 2.3 L9.3 2.7 L5.7 8.4 L5.0 8.5 L2.0 6.4 Z" fill="#1c1c1c"/></svg></div>
<div class="cb" style="left:676px;top:447px;"><svg width="11" height="11" viewBox="0 0 11 11"><path d="M2.3 5.5 L5.3 7.1 L8.8 2.3 L9.3 2.7 L5.7 8.4 L5.0 8.5 L2.0 6.4 Z" fill="#1c1c1c"/></svg></div>
<div class="t" style="left:160.6px;top:469px;letter-spacing:0.15px;">16:00 - 16:59</div>
<div class="cb" style="left:271px;top:470px;"><svg width="11" height="11" viewBox="0 0 11 11"><path d="M2.3 5.5 L5.3 7.1 L8.8 2.3 L9.3 2.7 L5.7 8.4 L5.0 8.5 L2.0 6.4 Z" fill="#1c1c1c"/></svg></div>
<div class="cb" style="left:332px;top:470px;"><svg width="11" height="11" viewBox="0 0 11 11"><path d="M2.3 5.5 L5.3 7.1 L8.8 2.3 L9.3 2.7 L5.7 8.4 L5.0 8.5 L2.0 6.4 Z" fill="#1c1c1c"/></svg></div>
<div class="cb" style="left:397px;top:470px;"><svg width="11" height="11" viewBox="0 0 11 11"><path d="M2.3 5.5 L5.3 7.1 L8.8 2.3 L9.3 2.7 L5.7 8.4 L5.0 8.5 L2.0 6.4 Z" fill="#1c1c1c"/></svg></div>
<div class="cb" style="left:474px;top:470px;"><svg width="11" height="11" viewBox="0 0 11 11"><path d="M2.3 5.5 L5.3 7.1 L8.8 2.3 L9.3 2.7 L5.7 8.4 L5.0 8.5 L2.0 6.4 Z" fill="#1c1c1c"/></svg></div>
<div class="cb" style="left:553px;top:470px;"><svg width="11" height="11" viewBox="0 0 11 11"><path d="M2.3 5.5 L5.3 7.1 L8.8 2.3 L9.3 2.7 L5.7 8.4 L5.0 8.5 L2.0 6.4 Z" fill="#1c1c1c"/></svg></div>
<div class="cb" style="left:615px;top:470px;"><svg width="11" height="11" viewBox="0 0 11 11"><path d="M2.3 5.5 L5.3 7.1 L8.8 2.3 L9.3 2.7 L5.7 8.4 L5.0 8.5 L2.0 6.4 Z" fill="#1c1c1c"/></svg></div>
<div class="cb" style="left:676px;top:470px;"><svg width="11" height="11" viewBox="0 0 11 11"><path d="M2.3 5.5 L5.3 7.1 L8.8 2.3 L9.3 2.7 L5.7 8.4 L5.0 8.5 L2.0 6.4 Z" fill="#1c1c1c"/></svg></div>
<div class="t" style="left:160.6px;top:492px;letter-spacing:0.15px;">17:00 - 17:59</div>
<div class="cb" style="left:271px;top:493px;"><svg width="11" height="11" viewBox="0 0 11 11"><path d="M2.3 5.5 L5.3 7.1 L8.8 2.3 L9.3 2.7 L5.7 8.4 L5.0 8.5 L2.0 6.4 Z" fill="#1c1c1c"/></svg></div>
<div class="cb" style="left:332px;top:493px;"><svg width="11" height="11" viewBox="0 0 11 11"><path d="M2.3 5.5 L5.3 7.1 L8.8 2.3 L9.3 2.7 L5.7 8.4 L5.0 8.5 L2.0 6.4 Z" fill="#1c1c1c"/></svg></div>
<div class="cb" style="left:397px;top:493px;"><svg width="11" height="11" viewBox="0 0 11 11"><path d="M2.3 5.5 L5.3 7.1 L8.8 2.3 L9.3 2.7 L5.7 8.4 L5.0 8.5 L2.0 6.4 Z" fill="#1c1c1c"/></svg></div>
<div class="cb" style="left:474px;top:493px;"><svg width="11" height="11" viewBox="0 0 11 11"><path d="M2.3 5.5 L5.3 7.1 L8.8 2.3 L9.3 2.7 L5.7 8.4 L5.0 8.5 L2.0 6.4 Z" fill="#1c1c1c"/></svg></div>
<div class="cb" style="left:553px;top:493px;"><svg width="11" height="11" viewBox="0 0 11 11"><path d="M2.3 5.5 L5.3 7.1 L8.8 2.3 L9.3 2.7 L5.7 8.4 L5.0 8.5 L2.0 6.4 Z" fill="#1c1c1c"/></svg></div>
<div class="cb" style="left:615px;top:493px;"><svg width="11" height="11" viewBox="0 0 11 11"><path d="M2.3 5.5 L5.3 7.1 L8.8 2.3 L9.3 2.7 L5.7 8.4 L5.0 8.5 L2.0 6.4 Z" fill="#1c1c1c"/></svg></div>
<div class="cb" style="left:676px;top:493px;"><svg width="11" height="11" viewBox="0 0 11 11"><path d="M2.3 5.5 L5.3 7.1 L8.8 2.3 L9.3 2.7 L5.7 8.4 L5.0 8.5 L2.0 6.4 Z" fill="#1c1c1c"/></svg></div>
<div class="t" style="left:160.6px;top:515px;letter-spacing:0.15px;">18:00 - 18:59</div>
<div class="cb" style="left:271px;top:516px;"><svg width="11" height="11" viewBox="0 0 11 11"><path d="M2.3 5.5 L5.3 7.1 L8.8 2.3 L9.3 2.7 L5.7 8.4 L5.0 8.5 L2.0 6.4 Z" fill="#1c1c1c"/></svg></div>
<div class="cb" style="left:332px;top:516px;"><svg width="11" height="11" viewBox="0 0 11 11"><path d="M2.3 5.5 L5.3 7.1 L8.8 2.3 L9.3 2.7 L5.7 8.4 L5.0 8.5 L2.0 6.4 Z" fill="#1c1c1c"/></svg></div>
<div class="cb" style="left:397px;top:516px;"><svg width="11" height="11" viewBox="0 0 11 11"><path d="M2.3 5.5 L5.3 7.1 L8.8 2.3 L9.3 2.7 L5.7 8.4 L5.0 8.5 L2.0 6.4 Z" fill="#1c1c1c"/></svg></div>
<div class="cb" style="left:474px;top:516px;"><svg width="11" height="11" viewBox="0 0 11 11"><path d="M2.3 5.5 L5.3 7.1 L8.8 2.3 L9.3 2.7 L5.7 8.4 L5.0 8.5 L2.0 6.4 Z" fill="#1c1c1c"/></svg></div>
<div class="cb" style="left:553px;top:516px;"><svg width="11" height="11" viewBox="0 0 11 11"><path d="M2.3 5.5 L5.3 7.1 L8.8 2.3 L9.3 2.7 L5.7 8.4 L5.0 8.5 L2.0 6.4 Z" fill="#1c1c1c"/></svg></div>
<div class="cb" style="left:615px;top:516px;"><svg width="11" height="11" viewBox="0 0 11 11"><path d="M2.3 5.5 L5.3 7.1 L8.8 2.3 L9.3 2.7 L5.7 8.4 L5.0 8.5 L2.0 6.4 Z" fill="#1c1c1c"/></svg></div>
<div class="cb" style="left:676px;top:516px;"><svg width="11" height="11" viewBox="0 0 11 11"><path d="M2.3 5.5 L5.3 7.1 L8.8 2.3 L9.3 2.7 L5.7 8.4 L5.0 8.5 L2.0 6.4 Z" fill="#1c1c1c"/></svg></div>
<div class="t" style="left:160.6px;top:538px;letter-spacing:0.15px;">19:00 - 19:59</div>
<div class="cb" style="left:271px;top:539px;"><svg width="11" height="11" viewBox="0 0 11 11"><path d="M2.3 5.5 L5.3 7.1 L8.8 2.3 L9.3 2.7 L5.7 8.4 L5.0 8.5 L2.0 6.4 Z" fill="#1c1c1c"/></svg></div>
<div class="cb" style="left:332px;top:539px;"><svg width="11" height="11" viewBox="0 0 11 11"><path d="M2.3 5.5 L5.3 7.1 L8.8 2.3 L9.3 2.7 L5.7 8.4 L5.0 8.5 L2.0 6.4 Z" fill="#1c1c1c"/></svg></div>
<div class="cb" style="left:397px;top:539px;"><svg width="11" height="11" viewBox="0 0 11 11"><path d="M2.3 5.5 L5.3 7.1 L8.8 2.3 L9.3 2.7 L5.7 8.4 L5.0 8.5 L2.0 6.4 Z" fill="#1c1c1c"/></svg></div>
<div class="cb" style="left:474px;top:539px;"><svg width="11" height="11" viewBox="0 0 11 11"><path d="M2.3 5.5 L5.3 7.1 L8.8 2.3 L9.3 2.7 L5.7 8.4 L5.0 8.5 L2.0 6.4 Z" fill="#1c1c1c"/></svg></div>
<div class="cb" style="left:553px;top:539px;"><svg width="11" height="11" viewBox="0 0 11 11"><path d="M2.3 5.5 L5.3 7.1 L8.8 2.3 L9.3 2.7 L5.7 8.4 L5.0 8.5 L2.0 6.4 Z" fill="#1c1c1c"/></svg></div>
<div class="cb" style="left:615px;top:539px;"><svg width="11" height="11" viewBox="0 0 11 11"><path d="M2.3 5.5 L5.3 7.1 L8.8 2.3 L9.3 2.7 L5.7 8.4 L5.0 8.5 L2.0 6.4 Z" fill="#1c1c1c"/></svg></div>
<div class="cb" style="left:676px;top:539px;"><svg width="11" height="11" viewBox="0 0 11 11"><path d="M2.3 5.5 L5.3 7.1 L8.8 2.3 L9.3 2.7 L5.7 8.4 L5.0 8.5 L2.0 6.4 Z" fill="#1c1c1c"/></svg></div>
<div class="t" style="left:160.6px;top:561px;letter-spacing:0.15px;">20:00 - 20:59</div>
<div class="cb" style="left:271px;top:562px;"><svg width="11" height="11" viewBox="0 0 11 11"><path d="M2.3 5.5 L5.3 7.1 L8.8 2.3 L9.3 2.7 L5.7 8.4 L5.0 8.5 L2.0 6.4 Z" fill="#1c1c1c"/></svg></div>
<div class="cb" style="left:332px;top:562px;"><svg width="11" height="11" viewBox="0 0 11 11"><path d="M2.3 5.5 L5.3 7.1 L8.8 2.3 L9.3 2.7 L5.7 8.4 L5.0 8.5 L2.0 6.4 Z" fill="#1c1c1c"/></svg></div>
<div class="cb" style="left:397px;top:562px;"><svg width="11" height="11" viewBox="0 0 11 11"><path d="M2.3 5.5 L5.3 7.1 L8.8 2.3 L9.3 2.7 L5.7 8.4 L5.0 8.5 L2.0 6.4 Z" fill="#1c1c1c"/></svg></div>
<div class="cb" style="left:474px;top:562px;"><svg width="11" height="11" viewBox="0 0 11 11"><path d="M2.3 5.5 L5.3 7.1 L8.8 2.3 L9.3 2.7 L5.7 8.4 L5.0 8.5 L2.0 6.4 Z" fill="#1c1c1c"/></svg></div>
<div class="cb" style="left:553px;top:562px;"><svg width="11" height="11" viewBox="0 0 11 11"><path d="M2.3 5.5 L5.3 7.1 L8.8 2.3 L9.3 2.7 L5.7 8.4 L5.0 8.5 L2.0 6.4 Z" fill="#1c1c1c"/></svg></div>
<div class="cb" style="left:615px;top:562px;"><svg width="11" height="11" viewBox="0 0 11 11"><path d="M2.3 5.5 L5.3 7.1 L8.8 2.3 L9.3 2.7 L5.7 8.4 L5.0 8.5 L2.0 6.4 Z" fill="#1c1c1c"/></svg></div>
<div class="cb" style="left:676px;top:562px;"><svg width="11" height="11" viewBox="0 0 11 11"><path d="M2.3 5.5 L5.3 7.1 L8.8 2.3 L9.3 2.7 L5.7 8.4 L5.0 8.5 L2.0 6.4 Z" fill="#1c1c1c"/></svg></div>
<div class="t" style="left:160.6px;top:584px;letter-spacing:0.15px;">21:00 - 21:59</div>
<div class="cb" style="left:271px;top:585px;"><svg width="11" height="11" viewBox="0 0 11 11"><path d="M2.3 5.5 L5.3 7.1 L8.8 2.3 L9.3 2.7 L5.7 8.4 L5.0 8.5 L2.0 6.4 Z" fill="#1c1c1c"/></svg></div>
<div class="cb" style="left:332px;top:585px;"><svg width="11" height="11" viewBox="0 0 11 11"><path d="M2.3 5.5 L5.3 7.1 L8.8 2.3 L9.3 2.7 L5.7 8.4 L5.0 8.5 L2.0 6.4 Z" fill="#1c1c1c"/></svg></div>
<div class="cb" style="left:397px;top:585px;"><svg width="11" height="11" viewBox="0 0 11 11"><path d="M2.3 5.5 L5.3 7.1 L8.8 2.3 L9.3 2.7 L5.7 8.4 L5.0 8.5 L2.0 6.4 Z" fill="#1c1c1c"/></svg></div>
<div class="cb" style="left:474px;top:585px;"><svg width="11" height="11" viewBox="0 0 11 11"><path d="M2.3 5.5 L5.3 7.1 L8.8 2.3 L9.3 2.7 L5.7 8.4 L5.0 8.5 L2.0 6.4 Z" fill="#1c1c1c"/></svg></div>
<div class="cb" style="left:553px;top:585px;"><svg width="11" height="11" viewBox="0 0 11 11"><path d="M2.3 5.5 L5.3 7.1 L8.8 2.3 L9.3 2.7 L5.7 8.4 L5.0 8.5 L2.0 6.4 Z" fill="#1c1c1c"/></svg></div>
<div class="cb" style="left:615px;top:585px;"><svg width="11" height="11" viewBox="0 0 11 11"><path d="M2.3 5.5 L5.3 7.1 L8.8 2.3 L9.3 2.7 L5.7 8.4 L5.0 8.5 L2.0 6.4 Z" fill="#1c1c1c"/></svg></div>
<div class="cb" style="left:676px;top:585px;"><svg width="11" height="11" viewBox="0 0 11 11"><path d="M2.3 5.5 L5.3 7.1 L8.8 2.3 L9.3 2.7 L5.7 8.4 L5.0 8.5 L2.0 6.4 Z" fill="#1c1c1c"/></svg></div>
<div class="t" style="left:160.6px;top:607px;letter-spacing:0.15px;">22:00 - 22:59</div>
<div class="cb" style="left:271px;top:608px;"><svg width="11" height="11" viewBox="0 0 11 11"><path d="M2.3 5.5 L5.3 7.1 L8.8 2.3 L9.3 2.7 L5.7 8.4 L5.0 8.5 L2.0 6.4 Z" fill="#1c1c1c"/></svg></div>
<div class="cb" style="left:332px;top:608px;"><svg width="11" height="11" viewBox="0 0 11 11"><path d="M2.3 5.5 L5.3 7.1 L8.8 2.3 L9.3 2.7 L5.7 8.4 L5.0 8.5 L2.0 6.4 Z" fill="#1c1c1c"/></svg></div>
<div class="cb" style="left:397px;top:608px;"><svg width="11" height="11" viewBox="0 0 11 11"><path d="M2.3 5.5 L5.3 7.1 L8.8 2.3 L9.3 2.7 L5.7 8.4 L5.0 8.5 L2.0 6.4 Z" fill="#1c1c1c"/></svg></div>
<div class="cb" style="left:474px;top:608px;"><svg width="11" height="11" viewBox="0 0 11 11"><path d="M2.3 5.5 L5.3 7.1 L8.8 2.3 L9.3 2.7 L5.7 8.4 L5.0 8.5 L2.0 6.4 Z" fill="#1c1c1c"/></svg></div>
<div class="cb" style="left:553px;top:608px;"><svg width="11" height="11" viewBox="0 0 11 11"><path d="M2.3 5.5 L5.3 7.1 L8.8 2.3 L9.3 2.7 L5.7 8.4 L5.0 8.5 L2.0 6.4 Z" fill="#1c1c1c"/></svg></div>
<div class="cb" style="left:615px;top:608px;"><svg width="11" height="11" viewBox="0 0 11 11"><path d="M2.3 5.5 L5.3 7.1 L8.8 2.3 L9.3 2.7 L5.7 8.4 L5.0 8.5 L2.0 6.4 Z" fill="#1c1c1c"/></svg></div>
<div class="cb" style="left:676px;top:608px;"><svg width="11" height="11" viewBox="0 0 11 11"><path d="M2.3 5.5 L5.3 7.1 L8.8 2.3 L9.3 2.7 L5.7 8.4 L5.0 8.5 L2.0 6.4 Z" fill="#1c1c1c"/></svg></div>
<div class="t" style="left:160.6px;top:630px;letter-spacing:0.15px;">23:00 - 23:59</div>
<div class="cb" style="left:271px;top:631px;"><svg width="11" height="11" viewBox="0 0 11 11"><path d="M2.3 5.5 L5.3 7.1 L8.8 2.3 L9.3 2.7 L5.7 8.4 L5.0 8.5 L2.0 6.4 Z" fill="#1c1c1c"/></svg></div>
<div class="cb" style="left:332px;top:631px;"><svg width="11" height="11" viewBox="0 0 11 11"><path d="M2.3 5.5 L5.3 7.1 L8.8 2.3 L9.3 2.7 L5.7 8.4 L5.0 8.5 L2.0 6.4 Z" fill="#1c1c1c"/></svg></div>
<div class="cb" style="left:397px;top:631px;"><svg width="11" height="11" viewBox="0 0 11 11"><path d="M2.3 5.5 L5.3 7.1 L8.8 2.3 L9.3 2.7 L5.7 8.4 L5.0 8.5 L2.0 6.4 Z" fill="#1c1c1c"/></svg></div>
<div class="cb" style="left:474px;top:631px;"><svg width="11" height="11" viewBox="0 0 11 11"><path d="M2.3 5.5 L5.3 7.1 L8.8 2.3 L9.3 2.7 L5.7 8.4 L5.0 8.5 L2.0 6.4 Z" fill="#1c1c1c"/></svg></div>
<div class="cb" style="left:553px;top:631px;"><svg width="11" height="11" viewBox="0 0 11 11"><path d="M2.3 5.5 L5.3 7.1 L8.8 2.3 L9.3 2.7 L5.7 8.4 L5.0 8.5 L2.0 6.4 Z" fill="#1c1c1c"/></svg></div>
<div class="cb" style="left:615px;top:631px;"><svg width="11" height="11" viewBox="0 0 11 11"><path d="M2.3 5.5 L5.3 7.1 L8.8 2.3 L9.3 2.7 L5.7 8.4 L5.0 8.5 L2.0 6.4 Z" fill="#1c1c1c"/></svg></div>
<div class="cb" style="left:676px;top:631px;"><svg width="11" height="11" viewBox="0 0 11 11"><path d="M2.3 5.5 L5.3 7.1 L8.8 2.3 L9.3 2.7 L5.7 8.4 L5.0 8.5 L2.0 6.4 Z" fill="#1c1c1c"/></svg></div>
<div class="btn" style="left:163px;top:668px;width:32px;">Ok</div>
<div class="btn" style="left:201px;top:668px;width:58px;">Cancel</div>
</div>
</body></html>
